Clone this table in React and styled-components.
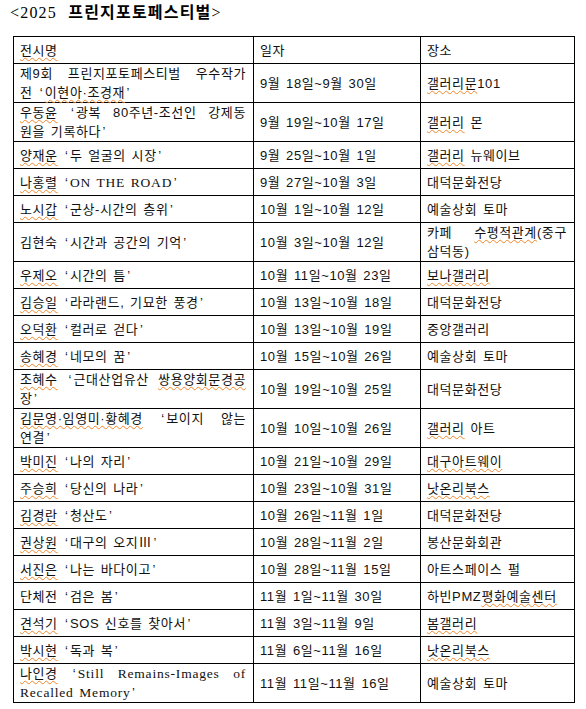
import React from "react";
import styled, { createGlobalStyle } from "styled-components";

const Global = createGlobalStyle`
  html, body { margin: 0; padding: 0; background: #fff; }
  body {
    font-family: "Liberation Sans", "Noto Sans CJK KR", sans-serif;
    color: #111;
  }
`;

const Page = styled.div`
  padding: 0 0 8px 0;
  width: 586px;
`;

const Title = styled.h1`
  margin: 0 0 13px 10px;
  padding-top: 1px;
  font-size: 16px;
  line-height: 21px;
  font-weight: normal;
  letter-spacing: 1.2px;
  word-spacing: 6px;
  font-family: "Liberation Serif", "Noto Sans CJK KR", serif;
  color: #000;
  b {
    font-family: "Noto Sans CJK KR", sans-serif;
    font-weight: 700;
  }
`;

const Table = styled.table`
  margin-left: 13px;
  width: 561px;
  border-collapse: collapse;
  table-layout: fixed;
  border: 1px solid #000;
`;

const Cell = styled.td`
  border: 1px solid #000;
  height: 26px;
  padding: 0 7px 0 6px;
  vertical-align: middle;
  font-size: 13px;
  line-height: 19px;
  letter-spacing: 0.6px;
  word-spacing: 1.5px;
  white-space: nowrap;
  color: #111;
  font-family: "Liberation Sans", "Noto Sans CJK KR", sans-serif;
`;

const Line = styled.div`
  text-align: ${(p) => (p.$justify ? "justify" : "left")};
  text-align-last: ${(p) => (p.$justify ? "justify" : "left")};
  white-space: normal;
`;

const Spell = styled.span`
  text-decoration: underline wavy #f0862a;
  text-decoration-thickness: 1px;
  text-underline-offset: 2px;
  text-decoration-skip-ink: none;
`;

const Quote = styled.span`
  padding: 0 1.5px;
`;

const Serif = styled.span`
  font-family: "Liberation Serif", "Noto Sans CJK KR", serif;
  font-size: 13.5px;
  letter-spacing: 0.8px;
`;

const S = Spell;
const L = () => <Quote>‘</Quote>;
const R = () => <Quote>’</Quote>;

const rows = [
  {
    title: [
      <>제9회 프린지포토페스티벌 우수작가</>,
      <>전 <L /><S>이현아·조경재</S><R /></>,
    ],
    date: "9월 18일~9월 30일",
    place: [<><S>갤러리문</S>101</>],
  },
  {
    title: [
      <><S>우동윤</S> <L />광복 80주년-조선인 강제동</>,
      <>원을 기록하다<R /></>,
    ],
    date: "9월 19일~10월 17일",
    place: [<><S>갤러리</S> 몬</>],
  },
  { title: [<><S>양재운</S> <L />두 얼굴의 시장<R /></>], date: "9월 25일~10월 1일", place: [<><S>갤러리</S> 뉴웨이브</>] },
  { title: [<><S>나홍렬</S> <L /><Serif>ON THE ROAD</Serif><R /></>], date: "9월 27일~10월 3일", place: ["대덕문화전당"] },
  { title: [<><S>노시갑</S> <L />군상-시간의 층위<R /></>], date: "10월 1일~10월 12일", place: ["예술상회 토마"] },
  {
    title: [<>김현숙 <L />시간과 공간의 기억<R /></>],
    date: "10월 3일~10월 12일",
    place: [<>카페 <S>수평적관계</S>(중구</>, <>삼덕동)</>],
    placeJustify: true,
  },
  { title: [<><S>우제오</S> <L />시간의 틈<R /></>], date: "10월 11일~10월 23일", place: [<><S>보나갤러리</S></>] },
  { title: [<><S>김승일</S> <L />라라랜드, 기묘한 풍경<R /></>], date: "10월 13일~10월 18일", place: ["대덕문화전당"] },
  { title: [<><S>오덕환</S> <L />컬러로 걷다<R /></>], date: "10월 13일~10월 19일", place: ["중앙갤러리"] },
  { title: [<><S>송혜경</S> <L />네모의 꿈<R /></>], date: "10월 15일~10월 26일", place: ["예술상회 토마"] },
  {
    title: [<><S>조혜수</S> <L />근대산업유산 <S>쌍용양회문경공</S></>, <>장<R /></>],
    date: "10월 19일~10월 25일",
    place: ["대덕문화전당"],
  },
  {
    title: [<><S>김문영·임영미·황혜경</S> <L />보이지 않는</>, <>연결<R /></>],
    date: "10월 10일~10월 26일",
    place: [<><S>갤러리</S> 아트</>],
  },
  { title: [<><S>박미진</S> <L />나의 자리<R /></>], date: "10월 21일~10월 29일", place: [<><S>대구아트웨이</S></>] },
  { title: [<><S>주승희</S> <L />당신의 나라<R /></>], date: "10월 23일~10월 31일", place: [<><S>낫온리북스</S></>] },
  { title: [<><S>김경란</S> <L />청산도<R /></>], date: "10월 26일~11월 1일", place: ["대덕문화전당"] },
  { title: [<><S>권상원</S> <L />대구의 오지Ⅲ<R /></>], date: "10월 28일~11월 2일", place: ["봉산문화회관"] },
  { title: [<><S>서진은</S> <L />나는 바다이고<R /></>], date: "10월 28일~11월 15일", place: ["아트스페이스 펄"] },
  { title: [<>단체전 <L />검은 봄<R /></>], date: "11월 1일~11월 30일", place: [<>하빈PMZ<S>평화예술센터</S></>] },
  { title: [<><S>견석기</S> <L />SOS 신호를 찾아서<R /></>], date: "11월 3일~11월 9일", place: [<><S>봄갤러리</S></>] },
  { title: [<><S>박시현</S> <L />독과 복<R /></>], date: "11월 6일~11월 16일", place: [<><S>낫온리북스</S></>] },
  {
    title: [
      <><S>나인경</S> <L /><Serif>Still Remains-Images of</Serif></>,
      <><Serif>Recalled Memory</Serif><R /></>,
    ],
    date: "11월 11일~11월 16일",
    place: ["예술상회 토마"],
  },
];

function Lines({ lines, justify }) {
  return lines.map((l, i) => (
    <Line key={i} $justify={justify && lines.length > 1 && i < lines.length - 1}>
      {l}
    </Line>
  ));
}

export default function App() {
  return (
    <>
      <Global />
      <Page>
        <Title>
          &lt;2025 <b>프린지포토페스티벌</b>&gt;
        </Title>
        <Table>
          <colgroup>
            <col style={{ width: 240 }} />
            <col style={{ width: 167 }} />
            <col style={{ width: 154 }} />
          </colgroup>
          <tbody>
            <tr>
              <Cell><S>전시명</S></Cell>
              <Cell>일자</Cell>
              <Cell>장소</Cell>
            </tr>
            {rows.map((r, i) => (
              <tr key={i}>
                <Cell>
                  <Lines lines={r.title} justify />
                </Cell>
                <Cell>{r.date}</Cell>
                <Cell>
                  <Lines lines={r.place} justify={r.placeJustify} />
                </Cell>
              </tr>
            ))}
          </tbody>
        </Table>
      </Page>
    </>
  );
}
